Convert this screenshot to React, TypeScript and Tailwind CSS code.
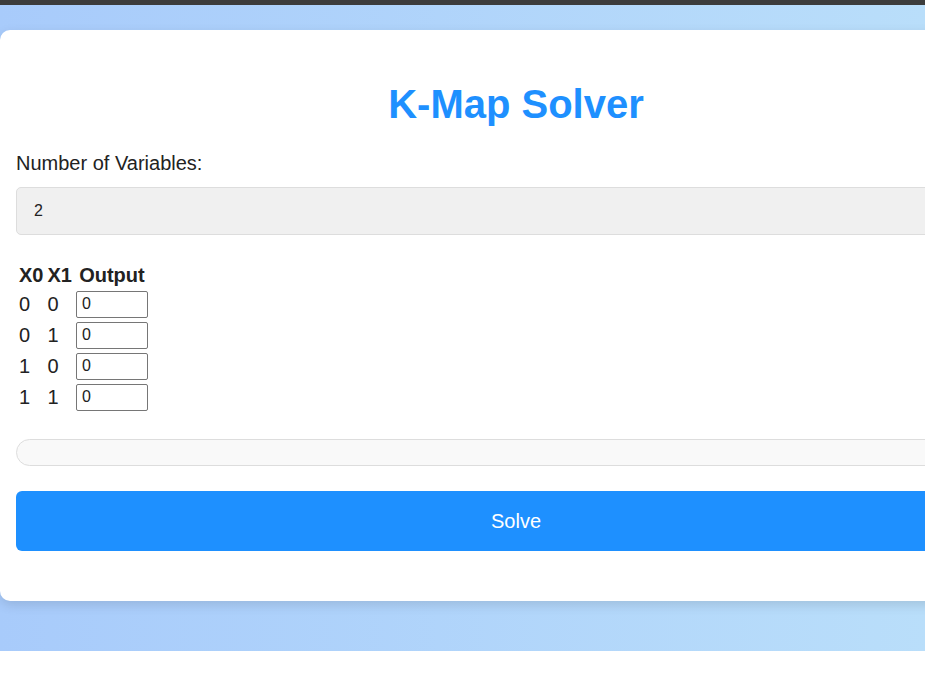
import { useState } from "react";

export default function App() {
  const [numVars, setNumVars] = useState("2");
  const [outputs, setOutputs] = useState(["0", "0", "0", "0"]);

  const rows = [
    [0, 0],
    [0, 1],
    [1, 0],
    [1, 1],
  ];

  return (
    <div className="w-full overflow-hidden bg-white font-['Liberation_Sans',Arial,sans-serif] text-[#222]">
      {/* top strip */}
      <div className="h-[5px] bg-[#3c3c3c]" />

      {/* page background */}
      <div className="bg-linear-to-r from-[#a8cbfb] to-[#b9defa] pt-[25px] pb-[50px]">
        <div className="w-[1032px] rounded-[10px] bg-white px-4 pt-[51px] pb-[50px] shadow-[0_4px_12px_rgba(0,0,0,0.12)]">
          <h1 className="text-center text-[40px] leading-[46px] font-bold text-[#1e90ff]">K-Map Solver</h1>

          <label className="mt-[24.5px] block text-[20px] leading-[23px]">Number of Variables:</label>
          <select
            value={numVars}
            onChange={(e) => setNumVars(e.target.value)}
            className="mt-[12.5px] block h-[48px] w-full appearance-none rounded-[5px] border border-[#dddddd] bg-[#f0f0f0] pl-[17px] text-[16px] text-[#222] outline-none"
          >
            <option>2</option>
            <option>3</option>
            <option>4</option>
          </select>

          {/* truth table */}
          <table className="mt-[25.5px] border-separate border-spacing-[2px] text-[20px] leading-[23px]">
            <thead>
              <tr>
                <th className="p-px text-center font-bold">X0</th>
                <th className="p-px text-center font-bold">X1</th>
                <th className="p-px text-center font-bold">Output</th>
              </tr>
            </thead>
            <tbody>
              {rows.map((r, i) => (
                <tr key={i}>
                  <td className="p-px">{r[0]}</td>
                  <td className="p-px">{r[1]}</td>
                  <td className="p-px">
                    <input
                      type="text"
                      value={outputs[i]}
                      onChange={(e) => {
                        const next = [...outputs];
                        next[i] = e.target.value;
                        setOutputs(next);
                      }}
                      className="block h-[27px] w-[72px] rounded-[2px] border border-[#767676] bg-white px-[5px] text-[16px] text-[#222] outline-none"
                    />
                  </td>
                </tr>
              ))}
            </tbody>
          </table>

          {/* result */}
          <div className="mt-[25.5px] h-[27px] rounded-full border border-[#dddddd] bg-[#f9f9f9]" />

          <button className="mt-[25px] block h-[60px] w-full rounded-[6px] bg-[#1e90ff] text-[20px] text-white">
            Solve
          </button>
        </div>
      </div>
    </div>
  );
}
